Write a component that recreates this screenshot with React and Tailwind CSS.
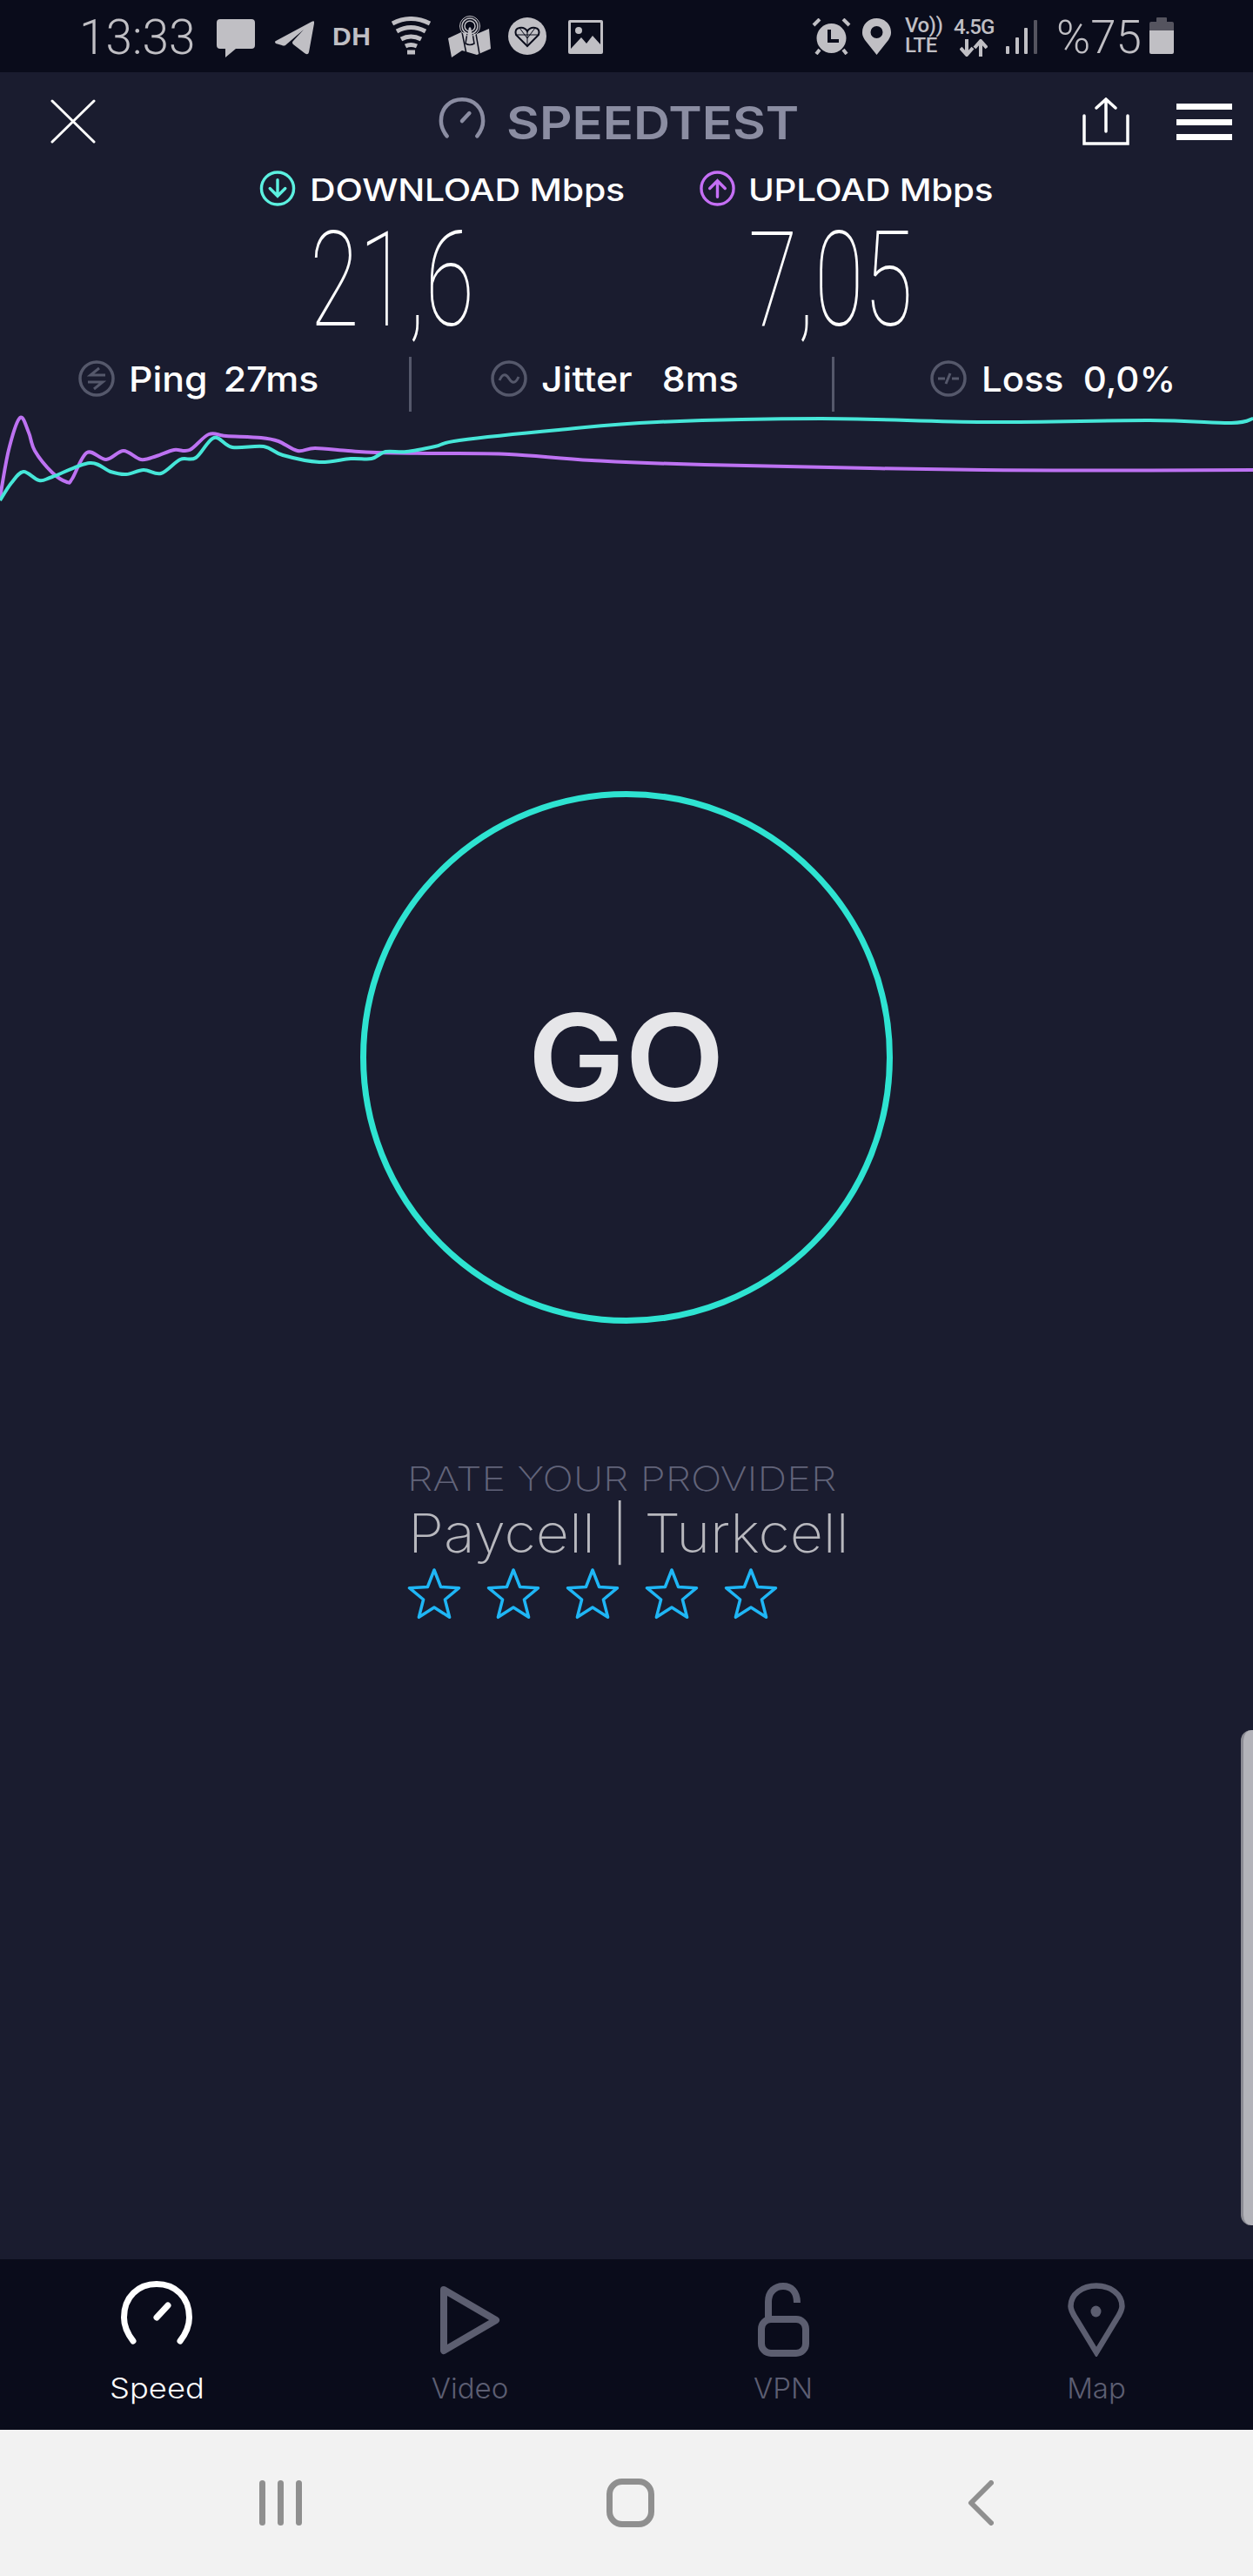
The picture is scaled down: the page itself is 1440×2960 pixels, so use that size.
import React from "react";

const purple = [[0,572],[10,517],[23,480],[33,497],[40,518],[60,543],[77,554],[83,550],[100,520],[122,528],[142,518],[162,528],[180,524],[200,517],[218,517],[240,499],[260,501],[300,503],[320,507],[342,518],[362,515],[400,518],[433,520],[500,521],[585,522],[680,529],[810,534],[1130,540],[1440,540]];
const cyan = [[0,575],[13,555],[27,542],[45,552],[60,548],[103,532],[127,542],[145,545],[165,540],[185,544],[207,528],[225,526],[246,503],[267,514],[303,513],[325,523],[367,531],[403,527],[427,527],[443,519],[467,519],[500,513],[528,506],[642,494],[755,485],[944,481],[1132,485],[1321,483],[1415,486],[1440,481]];

// smooth line through the points, y is relative to the chart top
function smooth(points, top) {
  const p = points.map(([x, y]) => [x, y - top]);
  let d = `M${p[0][0]} ${p[0][1]}`;
  for (let i = 0; i < p.length - 1; i++) {
    const a = p[i - 1] || p[i];
    const b = p[i];
    const c = p[i + 1];
    const e = p[i + 2] || c;
    d += ` C${b[0] + (c[0] - a[0]) / 6} ${b[1] + (c[1] - a[1]) / 6} ${c[0] - (e[0] - b[0]) / 6} ${c[1] - (e[1] - b[1]) / 6} ${c[0]} ${c[1]}`;
  }
  return d;
}

const starPoints = Array.from({ length: 10 }, (_, i) => {
  const r = i % 2 === 0 ? 30 : 13;
  const a = (Math.PI / 5) * i - Math.PI / 2;
  return `${(31 + r * Math.cos(a)).toFixed(1)},${(33 + r * Math.sin(a)).toFixed(1)}`;
}).join(" ");

const sb = "#c0bfc4";
const dark = "#0a0c1b";

function Gauge({ className, color }) {
  return (
    <svg viewBox="0 0 82 73" className={className} fill="none" stroke={color} strokeLinecap="round">
      <path d="M14 69 C7 60 3.5 51 3.5 42 C3.5 18 20 3.5 41 3.5 C62 3.5 78.5 18 78.5 42 C78.5 51 75 60 68 69" strokeWidth="7" />
      <path d="M41 42 L54 28" strokeWidth="7" />
    </svg>
  );
}

function StatusBar() {
  return (
    <div className="flex h-[83px] shrink-0 items-start bg-[#0a0c1b] text-[#c0bfc4]">
      <span className="ml-[91px] mt-[12px] w-[135px] font-['Roboto'] text-[55px] font-light leading-[62px]">13:33</span>
      <svg viewBox="0 0 44 44" className="ml-[23px] mt-[22px] h-[44px] w-[44px]" fill={sb}>
        <path d="M4 0 H40 Q44 0 44 4 V30 Q44 34 40 34 H22 L10 44 V34 H4 Q0 34 0 30 V4 Q0 0 4 0Z" />
      </svg>
      <svg viewBox="0 0 45 39" className="ml-[23px] mt-[24px] h-[39px] w-[45px]" fill={sb}>
        <path d="M1 23 L42 1 Q46 -1 45 3 L39 36 Q38 40 34 37 L21 27 Q19 25 21 23 L33 10 L12 28 Q10 29 8 28 L1 26 Q-1 24 1 23Z" />
      </svg>
      <span className="ml-[21px] mt-[21px] w-[47px] font-['Liberation_Sans'] text-[30px] font-bold leading-[42px] tracking-[0.5px]">DH</span>
      <svg viewBox="0 0 47 44" className="ml-[20px] mt-[19px] h-[44px] w-[47px]" fill="none" stroke={sb} strokeWidth="5">
        <path d="M2 8 Q23 -3 45 8" />
        <path d="M7 17 Q23 8 40 17" />
        <path d="M12 26 Q23 20 35 26" />
        <path d="M17 34 Q23 31 30 34" />
        <path d="M19 41 H28" strokeWidth="5" />
      </svg>
      <svg viewBox="0 0 49 48" className="ml-[19px] mt-[18px] h-[48px] w-[49px]">
        <path d="M0 26 L15 19 L33 21 L47 15 L49 38 L33 45 L16 40 L4 48Z" fill={sb} />
        <path d="M16 19 L21 44 M32 21 L36 44" stroke={dark} strokeWidth="1.5" />
        <path d="M20 32 L23 14 Q25 11 27 14 L30 32 Q25 35 20 32Z" fill={sb} stroke={dark} strokeWidth="1.5" />
        <circle cx="25" cy="12" r="6" fill="none" stroke={sb} strokeWidth="1.5" />
        <circle cx="25" cy="12" r="9" fill="none" stroke={sb} strokeWidth="1.5" />
        <circle cx="25" cy="12" r="11.5" fill="none" stroke={sb} strokeWidth="1" />
      </svg>
      <svg viewBox="0 0 44 43" className="ml-[20px] mt-[20px] h-[43px] w-[44px]">
        <ellipse cx="22" cy="21.5" rx="22" ry="21.5" fill={sb} />
        <path d="M22 33 L9 20 Q7 13 13 12 Q19 11 22 16 Q25 11 31 12 Q37 13 35 20Z" fill="none" stroke={dark} strokeWidth="2" />
        <path d="M22 16 V33 M9 20 H35 M13 12 L22 24 L31 12" fill="none" stroke={dark} strokeWidth="1" />
      </svg>
      <svg viewBox="0 0 40 39" className="ml-[25px] mt-[23px] h-[39px] w-[40px]">
        <rect x="0" y="0" width="40" height="39" rx="2" fill={sb} />
        <rect x="3" y="3" width="34" height="33" fill={dark} />
        <circle cx="12" cy="12" r="4" fill={sb} />
        <path d="M3 33 L15 20 L21 27 L28 18 L37 28 V36 H3Z" fill={sb} />
      </svg>

      <svg viewBox="0 0 45 42" className="ml-[240px] mt-[21px] h-[42px] w-[45px]">
        <path d="M2 8 L9 1 M43 8 L36 1 M9 36 L5 41 M36 36 L40 41" stroke={sb} strokeWidth="4" />
        <circle cx="22.5" cy="23" r="17" fill={sb} />
        <path d="M20 13 V26 H31" fill="none" stroke={dark} strokeWidth="4" />
      </svg>
      <svg viewBox="0 0 33 42" className="ml-[13px] mt-[21px] h-[42px] w-[33px]">
        <path fillRule="evenodd" fill={sb} d="M16.5 42 L3 25 C0 20 0 18 0 16 C0 7 7 0 16.5 0 C26 0 33 7 33 16 C33 18 33 20 30 25Z M16.5 9 A7 7 0 1 0 16.5 23 A7 7 0 1 0 16.5 9Z" />
      </svg>
      <div className="ml-[16px] mt-[18px] flex w-[44px] flex-col font-['Roboto'] text-[24px] font-medium leading-[23px] tracking-[-0.5px]">
        <span>Vo))</span>
        <span>LTE</span>
      </div>
      <div className="ml-[12px] mt-[19px] flex w-[46px] flex-col">
        <span className="font-['Roboto'] text-[24px] font-medium leading-[25px] tracking-[-1px]">4.5G</span>
        <svg viewBox="0 0 32 20" className="ml-[7px] mt-[1px] h-[20px] w-[32px]" fill="none" stroke={sb} strokeWidth="4">
          <path d="M8 0 V17 M1 10 L8 18 L15 10 M24 20 V3 M17 10 L24 2 L31 10" />
        </svg>
      </div>
      <div className="ml-[14px] mt-[23px] flex h-[39px] w-[36px] items-end justify-between">
        <div className="h-[9px] w-[4px] rounded-[1px] bg-[#c0bfc4]" />
        <div className="h-[19px] w-[4px] rounded-[1px] bg-[#c0bfc4]" />
        <div className="h-[30px] w-[4px] rounded-[1px] bg-[#c0bfc4]" />
        <div className="h-[39px] w-[4px] rounded-[1px] bg-[#55545f]" />
      </div>
      <span className="ml-[22px] mt-[12px] w-[100px] font-['Roboto'] text-[53px] font-light leading-[62px]">%75</span>
      <div className="ml-[7px] mt-[20px] flex w-[28px] flex-col items-center">
        <div className="h-[5px] w-[12px] rounded-t-[1px] bg-[#55545f]" />
        <div className="h-[10px] w-[28px] rounded-t-[2px] bg-[#55545f]" />
        <div className="h-[27px] w-[28px] rounded-b-[2px] bg-[#c0bfc4]" />
      </div>
    </div>
  );
}

function Header() {
  return (
    <div className="flex h-[113px] shrink-0 items-start">
      <svg viewBox="0 0 52 51" className="ml-[58px] mt-[31px] h-[51px] w-[52px]" fill="none" stroke="#fff" strokeWidth="3" strokeLinecap="round">
        <path d="M2 2 L50 49 M50 2 L2 49" />
      </svg>
      <Gauge className="ml-[393px] mt-[29px] h-[47px] w-[56px]" color="#8b8da2" />
      <span className="ml-[23px] mt-[29px] w-[340px] origin-left scale-x-[1.12] text-[52px] font-semibold leading-[60px] text-[#8b8da2]">SPEEDTEST</span>
      <svg viewBox="0 0 54 55" className="ml-[322px] mt-[29px] h-[55px] w-[54px]" fill="none" stroke="#fff" strokeWidth="3.5" strokeLinecap="round">
        <path d="M2 21 V53 H52 V21 M27 39 V2 M16 12 L27 2 L38 12" />
      </svg>
      <div className="ml-[54px] mt-[36px] flex h-[42px] w-[64px] flex-col justify-between">
        <div className="h-[7px] bg-white" />
        <div className="h-[7px] bg-white" />
        <div className="h-[7px] bg-white" />
      </div>
    </div>
  );
}

function ArrowCircle({ color, up, className }) {
  return (
    <svg viewBox="0 0 42 42" className={className} fill="none" stroke={color} strokeLinecap="round">
      <circle cx="21" cy="21" r="19" strokeWidth="3.5" />
      <path d={up ? "M21 31 V12 M12 21 L21 12 L30 21" : "M21 11 V30 M12 21 L21 30 L30 21"} strokeWidth="3.5" />
    </svg>
  );
}

function Metrics() {
  return (
    <div className="shrink-0">
      <div className="flex h-[41px] items-center text-[36px] font-medium leading-[41px] text-white">
        <ArrowCircle color="#5cf0e0" className="ml-[298px] h-[41px] w-[42px]" />
        <span className="ml-[16px] mt-[3px] w-[448px] origin-left scale-x-[1.14] whitespace-nowrap tracking-[-0.2px]">DOWNLOAD Mbps</span>
        <ArrowCircle color="#c56ff5" up className="h-[41px] w-[41px]" />
        <span className="ml-[15px] mt-[3px] origin-left scale-x-[1.12] whitespace-nowrap tracking-[-0.2px]">UPLOAD Mbps</span>
      </div>
      <div className="flex h-[173px] items-start font-['Roboto'] text-[152px] font-thin leading-[170px] text-white">
        <span className="ml-[356px] w-[504px] origin-left scale-x-[0.68] whitespace-nowrap">21,6</span>
        <span className="origin-left scale-x-[0.68] whitespace-nowrap">7,05</span>
      </div>
    </div>
  );
}

function Divider({ className }) {
  return <div className={`h-[63px] w-[3px] bg-[#55586b] ${className}`} />;
}

function Stats() {
  const ring = "#55586b";
  return (
    <div className="flex h-[63px] shrink-0 items-start text-[40px] font-medium leading-[46px] text-white">
      <svg viewBox="0 0 42 42" className="ml-[90px] mt-[4px] h-[42px] w-[42px]" fill="none" stroke={ring} strokeWidth="3.5">
        <circle cx="21" cy="21" r="19" />
        <path d="M24 9 L14 17 H31 M18 33 L28 25 H11" strokeWidth="3" />
      </svg>
      <span className="ml-[16px] mt-[3px] flex w-[322px] origin-left scale-x-[1.07] gap-[17px] whitespace-nowrap">
        <span>Ping</span>
        <span>27ms</span>
      </span>
      <Divider />
      <svg viewBox="0 0 42 42" className="ml-[91px] mt-[4px] h-[42px] w-[42px]" fill="none" stroke={ring} strokeWidth="3.5">
        <circle cx="21" cy="21" r="19" />
        <path d="M10 23 C14 14 18 16 21 21 C24 26 28 28 32 19" strokeWidth="3" />
      </svg>
      <span className="ml-[16px] mt-[3px] w-[334px] origin-left scale-x-[1.07] whitespace-nowrap">Jitter&nbsp;&nbsp;&nbsp;8ms</span>
      <Divider />
      <svg viewBox="0 0 42 42" className="ml-[110px] mt-[4px] h-[42px] w-[42px]" fill="none" stroke={ring} strokeWidth="3.5">
        <circle cx="21" cy="21" r="19" />
        <path d="M9 21 H17 M25 21 H33 M18 27 L23 15" strokeWidth="3" />
      </svg>
      <span className="ml-[17px] mt-[3px] origin-left scale-x-[1.05] whitespace-nowrap">Loss&nbsp;&nbsp;0,0%</span>
    </div>
  );
}

function Chart() {
  return (
    <svg viewBox="0 0 1440 117" className="h-[117px] w-[1440px] shrink-0" fill="none" strokeWidth="4" strokeLinejoin="round">
      <path d={smooth(purple, 473)} stroke="#bd72f2" />
      <path d={smooth(cyan, 473)} stroke="#46e6d8" />
    </svg>
  );
}

function Rating() {
  return (
    <div className="ml-[468px] mt-[155px] flex flex-col items-start">
      <span className="h-[46px] origin-left scale-x-[1.22] whitespace-nowrap text-[38.5px] font-extralight leading-[46px] text-[#62647a]">RATE YOUR PROVIDER</span>
      <span className="ml-[1px] mt-[2px] h-[62px] origin-left scale-x-[1.07] whitespace-nowrap text-[62px] font-extralight leading-[76px] text-[#b8b8be]">Paycell | Turkcell</span>
      <div className="mt-[15px] flex gap-[29px]">
        {[0, 1, 2, 3, 4].map((i) => (
          <svg key={i} viewBox="0 0 62 62" className="h-[62px] w-[62px]" fill="none" stroke="#1fb6f5" strokeWidth="3.5" strokeLinejoin="round">
            <polygon points={starPoints} />
          </svg>
        ))}
      </div>
    </div>
  );
}

function TabItem({ label, active, icon }) {
  return (
    <div className="flex h-full flex-col items-center">
      <div className="flex h-[128px] w-full items-start justify-center">{icon}</div>
      <span className={`text-[33px] font-light leading-[40px] ${active ? "scale-x-[1.1] text-white" : "text-[#5c5e72]"}`}>{label}</span>
    </div>
  );
}

function TabBar() {
  const c = "#5c5e70";
  return (
    <div className="grid h-[196px] shrink-0 grid-cols-4 bg-[#0a0c1b]">
      <TabItem label="Speed" active icon={<Gauge className="mt-[25px] h-[73px] w-[82px]" color="#fff" />} />
      <TabItem
        label="Video"
        icon={
          <svg viewBox="0 0 70 80" className="mt-[30px] h-[80px] w-[70px]" fill="none" stroke={c} strokeWidth="8" strokeLinejoin="round">
            <path d="M5 5 L65 40 L5 75Z" />
          </svg>
        }
      />
      <TabItem
        label="VPN"
        icon={
          <svg viewBox="0 0 59 85" className="mt-[27px] h-[85px] w-[59px]" fill="none" stroke={c} strokeWidth="8">
            <rect x="4" y="42" width="51" height="39" rx="11" />
            <path d="M12 40 V22 C12 10 20 4 29 4 C38 4 45 10 45 23" />
          </svg>
        }
      />
      <TabItem
        label="Map"
        icon={
          <svg viewBox="0 0 66 85" className="mt-[27px] h-[85px] w-[66px]" fill="none" stroke={c} strokeWidth="6.5">
            <path d="M33 80 L10 42 C6 36 3.5 31 3.5 27 C3.5 13 17 3.5 33 3.5 C49 3.5 62.5 13 62.5 27 C62.5 31 60 36 56 42Z" />
            <ellipse cx="32.5" cy="33" rx="6" ry="6.5" fill={c} stroke="none" />
          </svg>
        }
      />
    </div>
  );
}

function NavBar() {
  return (
    <div className="flex h-[168px] shrink-0 items-center bg-[#f2f2f2]">
      <div className="ml-[298px] flex h-[52px] w-[49px] justify-between">
        <div className="w-[7px] rounded-full bg-[#8f8f8f]" />
        <div className="w-[7px] rounded-full bg-[#8f8f8f]" />
        <div className="w-[7px] rounded-full bg-[#8f8f8f]" />
      </div>
      <div className="ml-[350px] h-[56px] w-[55px] rounded-[18px] border-[7px] border-[#8f8f8f]" />
      <svg viewBox="0 0 30 52" className="ml-[360px] h-[52px] w-[30px]" fill="none" stroke="#8f8f8f" strokeWidth="6" strokeLinecap="round" strokeLinejoin="round">
        <path d="M27 3 L4 26 L27 49" />
      </svg>
    </div>
  );
}

export default function App() {
  return (
    <div className="relative flex h-[2960px] w-[1440px] flex-col overflow-hidden bg-[#1a1c2f] font-['Inter',sans-serif]">
      <StatusBar />
      <Header />
      <Metrics />
      <Stats />
      <Chart />
      <div className="flex-1">
        <div className="ml-[414px] mt-[319px] flex h-[612px] w-[612px] items-center justify-center rounded-full border-[7px] border-[#2ee3d1]">
          <span className="scale-x-[1.08] text-[138px] font-semibold leading-none text-[#e6e6e9]">GO</span>
        </div>
        <Rating />
      </div>
      <TabBar />
      <NavBar />
      <div className="absolute right-0 top-[1988px] h-[569px] w-[14px] rounded-l-[12px] border-l-[3px] border-[#8b8b93] bg-[#b3b3b9]" />
    </div>
  );
}
